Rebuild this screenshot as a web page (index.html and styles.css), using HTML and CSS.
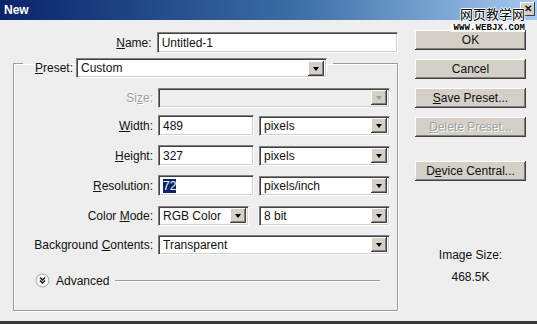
FILE: index.html
```html
<!DOCTYPE html>
<html>
<head>
    <title>New</title>
    <link rel="stylesheet" href="styles.css">
</head>
<body>
    <div class="dialog">
        <div class="titlebar">
            <span class="title">New</span>
            <span class="close">&#x2715;</span>
        </div>

        <!-- watermark stamped over the top right corner -->
        <div class="watermark">
            <span class="wm-cn">网页教学网</span>
            <span class="wm-url">WWW.WEBJX.COM</span>
        </div>

        <div class="content">
            <div class="main">
                <div class="row name-row">
                    <label class="lbl"><u>N</u>ame:</label>
                    <div class="field w-name">Untitled-1</div>
                </div>

                <fieldset class="group">
                    <legend class="group-head">
                        <label class="lbl-preset"><u>P</u>reset:</label>
                        <div class="field select w-preset">Custom<span class="arrow"><i></i></span></div>
                    </legend>

                    <div class="rows">
                        <div class="row row-size">
                            <label class="lbl disabled">Si<u>z</u>e:</label>
                            <div class="field select w-full is-off"><span class="arrow"><i></i></span></div>
                        </div>
                        <div class="row">
                            <label class="lbl"><u>W</u>idth:</label>
                            <div class="field w-num">489</div>
                            <div class="field select w-unit">pixels<span class="arrow"><i></i></span></div>
                        </div>
                        <div class="row">
                            <label class="lbl"><u>H</u>eight:</label>
                            <div class="field w-num">327</div>
                            <div class="field select w-unit">pixels<span class="arrow"><i></i></span></div>
                        </div>
                        <div class="row">
                            <label class="lbl"><u>R</u>esolution:</label>
                            <div class="field w-num"><span class="selected">72</span></div>
                            <div class="field select w-unit">pixels/inch<span class="arrow"><i></i></span></div>
                        </div>
                        <div class="row">
                            <label class="lbl">Color <u>M</u>ode:</label>
                            <div class="field select w-mode">RGB Color<span class="arrow"><i></i></span></div>
                            <div class="field select w-bits">8 bit<span class="arrow"><i></i></span></div>
                        </div>
                        <div class="row row-bg">
                            <label class="lbl">Background <u>C</u>ontents:</label>
                            <div class="field select w-full">Transparent<span class="arrow"><i></i></span></div>
                        </div>
                    </div>

                    <div class="advanced">
                        <svg class="adv-icon" width="15" height="15" viewBox="0 0 15 15">
                            <circle cx="7.5" cy="7.5" r="6.5" fill="#f6f6f6" stroke="#a8a8a8"/>
                            <path d="M5 4.5 L7.5 7 L10 4.5 M5 7.5 L7.5 10 L10 7.5" fill="none" stroke="#111" stroke-width="1.4"/>
                        </svg>
                        <span>Advanced</span>
                        <span class="adv-line"></span>
                    </div>
                </fieldset>
            </div>

            <div class="side">
                <button class="btn">OK</button>
                <button class="btn">Cancel</button>
                <button class="btn"><u>S</u>ave Preset...</button>
                <button class="btn btn-off"><u>D</u>elete Preset...</button>
                <button class="btn btn-device">D<u>e</u>vice Central...</button>

                <div class="image-size">
                    <div>Image Size:</div>
                    <div class="size-value">468.5K</div>
                </div>
            </div>
        </div>
    </div>
</body>
</html>
```

FILE: styles.css
```css
body {
    margin: 0;
    font-family: "Liberation Sans", Arial, sans-serif;
    font-size: 12px;
    color: #111;
}

.dialog {
    position: relative;
    width: 537px;
    height: 324px;
    box-sizing: border-box;
    background-color: #eeeeee;
    border-bottom: 3px solid #3a3a3a;
    overflow: hidden;
}

.titlebar {
    height: 20px;
    display: flex;
    align-items: center;
    justify-content: space-between;
    padding: 0 2px 0 4px;
    background: linear-gradient(to right, #0a246a, #3a6ea5 55%, #a6caf0);
}

.title {
    color: white;
    font-weight: bold;
    font-size: 12px;
}

.close {
    width: 15px;
    height: 14px;
    margin-top: -2px;
    background-color: #d4d0c8;
    box-shadow: inset -1px -1px #404040, inset 1px 1px #fff;
    font-size: 10px;
    font-weight: bold;
    line-height: 14px;
    text-align: center;
}

.watermark {
    position: absolute;
    top: 6px;
    right: 12px;
    display: flex;
    flex-direction: column;
    align-items: flex-end;
}

.wm-cn {
    font-family: "Noto Sans CJK SC", sans-serif;
    font-size: 13px;
    line-height: 16px;
    color: #000;
    text-shadow: 1px 0 #fff, -1px 0 #fff, 0 1px #fff, 0 -1px #fff;
}

.wm-url {
    margin-top: 2px;
    font-family: "Liberation Mono", monospace;
    font-weight: bold;
    font-size: 9px;
    line-height: 8px;
    letter-spacing: 0.1px;
    color: #000;
    background-color: #fff;
    padding-left: 2px;
}

.content {
    display: flex;
    padding: 12px 0 0 13px;
}

.main {
    width: 385px;
}

.row {
    display: flex;
    align-items: center;
    height: 21px;
}

.lbl {
    width: 139px;
    margin-right: 5px;
    text-align: right;
    white-space: nowrap;
}

.disabled {
    color: #a0a0a0;
    text-shadow: 1px 1px #fff;
}

.field {
    box-sizing: border-box;
    height: 21px;
    display: flex;
    align-items: center;
    padding: 0 0 0 4px;
    background-color: #fff;
    border: 1px solid;
    border-color: #808080 #ffffff #ffffff #808080;
    box-shadow: inset 1px 1px #404040, inset -1px -1px #d4d0c8;
    white-space: nowrap;
}

.select {
    height: 20px;
    padding-right: 2px;
}

.is-off {
    background-color: #eeeeee;
}

.arrow {
    margin-left: auto;
    width: 16px;
    height: 15px;
    display: flex;
    align-items: center;
    justify-content: center;
    background-color: #d4d0c8;
    box-shadow: inset -1px -1px #404040, inset 1px 1px #fff, inset -2px -2px #808080;
}

.arrow i {
    width: 0;
    height: 0;
    border-left: 3.5px solid transparent;
    border-right: 3.5px solid transparent;
    border-top: 4px solid #000;
    margin-top: 1px;
}

.is-off .arrow i {
    border-top-color: #a0a0a0;
}

.selected {
    background-color: #0a246a;
    color: white;
}

.w-name { width: 242px; }
.w-preset { width: 251px; }
.w-full { width: 232px; }
.w-num { width: 96px; margin-right: 5px; }
.w-unit { width: 131px; }
.w-mode { width: 91px; margin-right: 10px; }
.w-bits { width: 131px; }

.group {
    margin: 5px 0 0 0;
    padding: 0 0 22px 0;
    width: 385px;
    box-sizing: border-box;
    border: 1px solid #9c9c9c;
    box-shadow: inset 1px 1px #fff, 1px 1px #fff;
}

.group-head {
    display: flex;
    align-items: flex-start;
    height: 11px;
    margin-left: 9px;
    padding: 0 6px 0 12px;
}

.lbl-preset {
    margin-right: 3px;
    line-height: 20px;
}

.rows {
    display: flex;
    flex-direction: column;
    gap: 9px;
    padding-top: 18px;
}

.row-size {
    margin-bottom: -2px;
}

.row-bg {
    margin-top: -1px;
}

.advanced {
    display: flex;
    align-items: center;
    margin-top: 18px;
    padding-left: 21px;
}

.adv-icon {
    margin-right: 6px;
}

.adv-line {
    width: 265px;
    margin-left: 6px;
    border-top: 1px solid #9c9c9c;
    border-bottom: 1px solid #fff;
}

.side {
    display: flex;
    flex-direction: column;
    gap: 9px;
    margin: -2px 0 0 17px;
    width: 111px;
}

.btn {
    height: 20px;
    width: 111px;
    padding: 0;
    font-family: inherit;
    font-size: 12px;
    color: #111;
    background-color: #d4d0c8;
    border: none;
    box-shadow: inset -1px -1px #404040, inset 1px 1px #fff, inset -2px -2px #808080;
}

.btn-off {
    color: #a0a0a0;
    text-shadow: 1px 1px #fff;
}

.btn-device {
    margin-top: 15px;
}

.image-size {
    margin-top: 58px;
    text-align: center;
    line-height: 14px;
}

.size-value {
    margin-top: 8px;
}
```
